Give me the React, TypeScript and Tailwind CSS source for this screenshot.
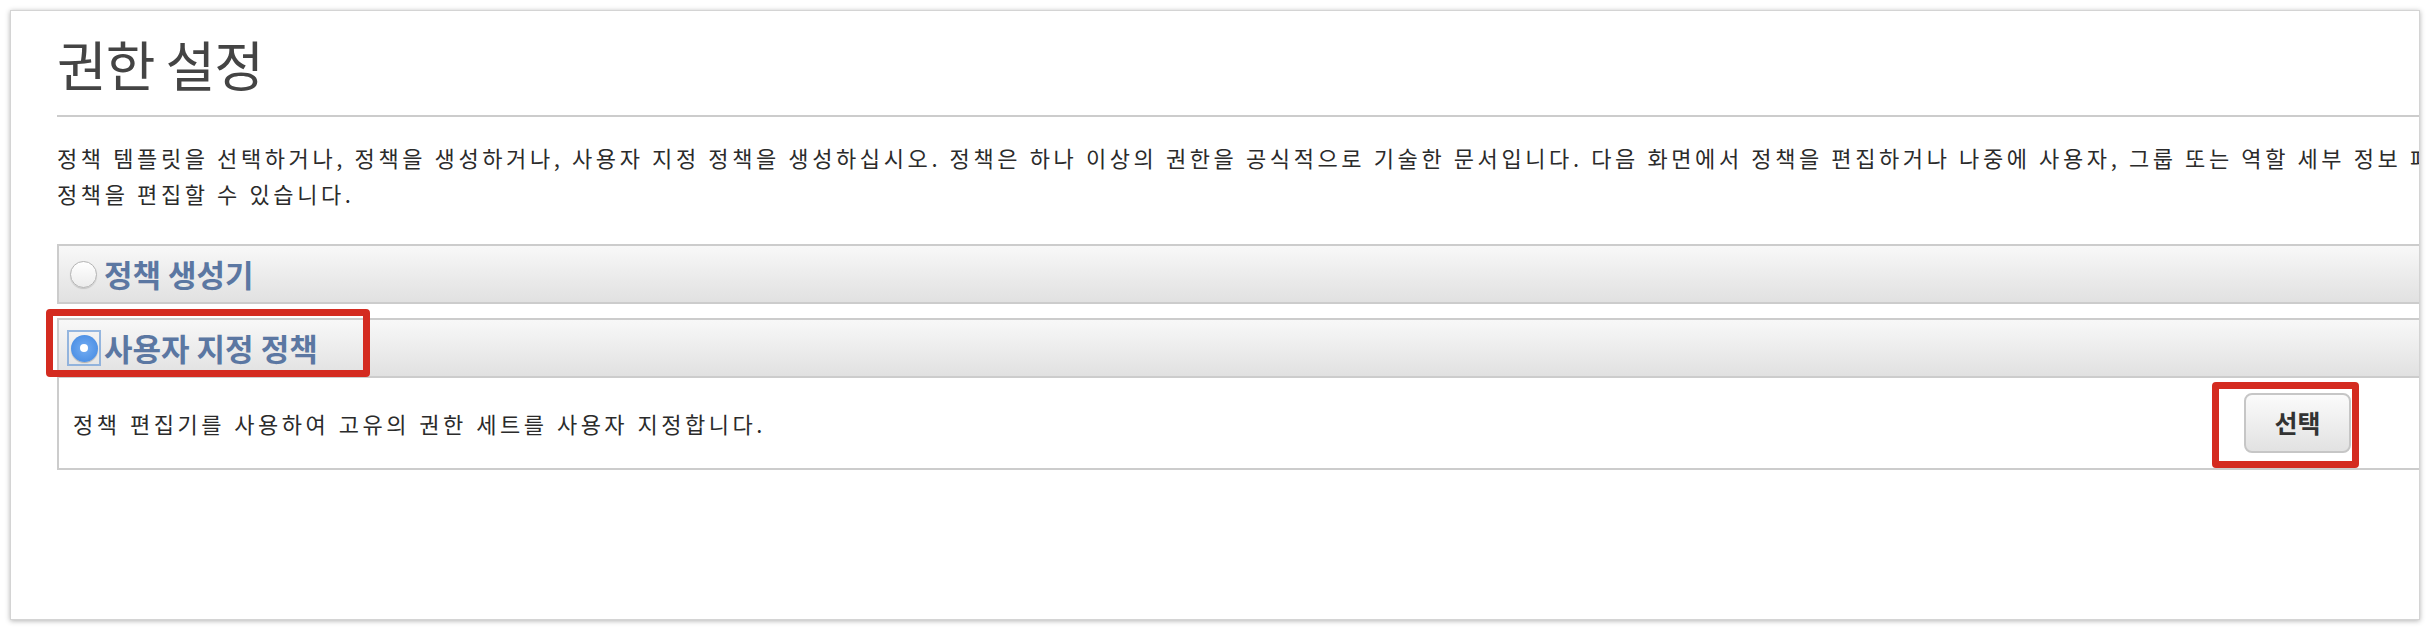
import React from 'react';

const lines = [
  '정책 템플릿을 선택하거나, 정책을 생성하거나, 사용자 지정 정책을 생성하십시오. 정책은 하나 이상의 권한을 공식적으로 기술한 문서입니다. 다음 화면에서 정책을 편집하거나 나중에 사용자, 그룹 또는 역할 세부 정보 페이지에서',
  '정책을 편집할 수 있습니다.',
];

function Radio({ checked }: { checked?: boolean }) {
  if (checked) {
    return (
      <span className="flex h-[36px] w-[34px] shrink-0 items-center justify-center border-2 border-[#7da6da]/80">
        <span className="flex h-[27px] w-[27px] items-center justify-center rounded-full bg-radial from-[#74adf2] to-[#3f86e0] shadow-[0_1px_1px_rgba(0,0,0,0.25)]">
          <span className="h-[8px] w-[8px] rounded-full bg-white" />
        </span>
      </span>
    );
  }
  return (
    <span className="h-[27px] w-[27px] shrink-0 rounded-full border border-[#b4b4b4] bg-linear-to-b from-white to-[#ececec] shadow-[0_1px_1px_rgba(0,0,0,0.15)]" />
  );
}

export default function App() {
  return (
    <div className="relative h-[630px] w-[2430px] bg-white pl-[10px] pt-[10px] font-['Noto_Sans_CJK_KR','Noto_Sans',sans-serif]">
      {/* 카드 */}
      <div className="h-[610px] w-[2410px] overflow-hidden border border-[#d4d4d4] bg-white pl-[46px] pt-[23px] shadow-[0_1px_5px_rgba(0,0,0,0.3)]">
        <div className="w-[2410px]">
          <h1 className="text-[54px] leading-[60px] font-normal tracking-[-1px] text-[#444444]">권한 설정</h1>
          <div className="mt-[21px] border-t-2 border-[#cccccc]" />

          <div className="mt-[22px] text-[22px] leading-[36px] tracking-[3.6px] text-[#2b2b2b]">
            {lines.map((t, i) => (
              <div key={i} className="whitespace-nowrap">{t}</div>
            ))}
          </div>

          {/* 정책 생성기 */}
          <div className="mt-[33px] flex h-[60px] items-center gap-[7px] border-2 border-[#cccccc] bg-linear-to-b from-[#f8f8f8] to-[#e1e1e1] pl-[11px]">
            <Radio />
            <span className="text-[31px] font-bold text-[#5b77a2]">정책 생성기</span>
          </div>

          {/* 사용자 지정 정책 */}
          <div className="mt-[14px] border-2 border-[#cccccc]">
            <div className="flex h-[58px] items-center gap-[3px] border-b-2 border-[#cccccc] bg-linear-to-b from-[#f8f8f8] to-[#e1e1e1] pl-[8px]">
              <Radio checked />
              <span className="text-[31px] font-bold text-[#5b77a2]">사용자 지정 정책</span>
            </div>
            <div className="flex h-[90px] items-center justify-between pl-[14px] pr-[114px]">
              <span className="text-[22px] tracking-[3.5px] [word-spacing:1px] text-[#2b2b2b]">정책 편집기를 사용하여 고유의 권한 세트를 사용자 지정합니다.</span>
              <button className="h-[60px] w-[107px] rounded-[8px] border-2 border-[#c6c6c6] bg-linear-to-b from-[#fbfbfb] to-[#e2e2e2] text-[25px] font-bold text-[#333333]">
                선택
              </button>
            </div>
          </div>
        </div>
      </div>

      {/* 빨간 강조 표시 */}
      <div className="absolute left-[46px] top-[309px] h-[68px] w-[324px] rounded-[4px] border-[7px] border-[#d42b20]" />
      <div className="absolute left-[2212px] top-[382px] h-[86px] w-[147px] rounded-[4px] border-[7px] border-[#d42b20]" />
    </div>
  );
}
